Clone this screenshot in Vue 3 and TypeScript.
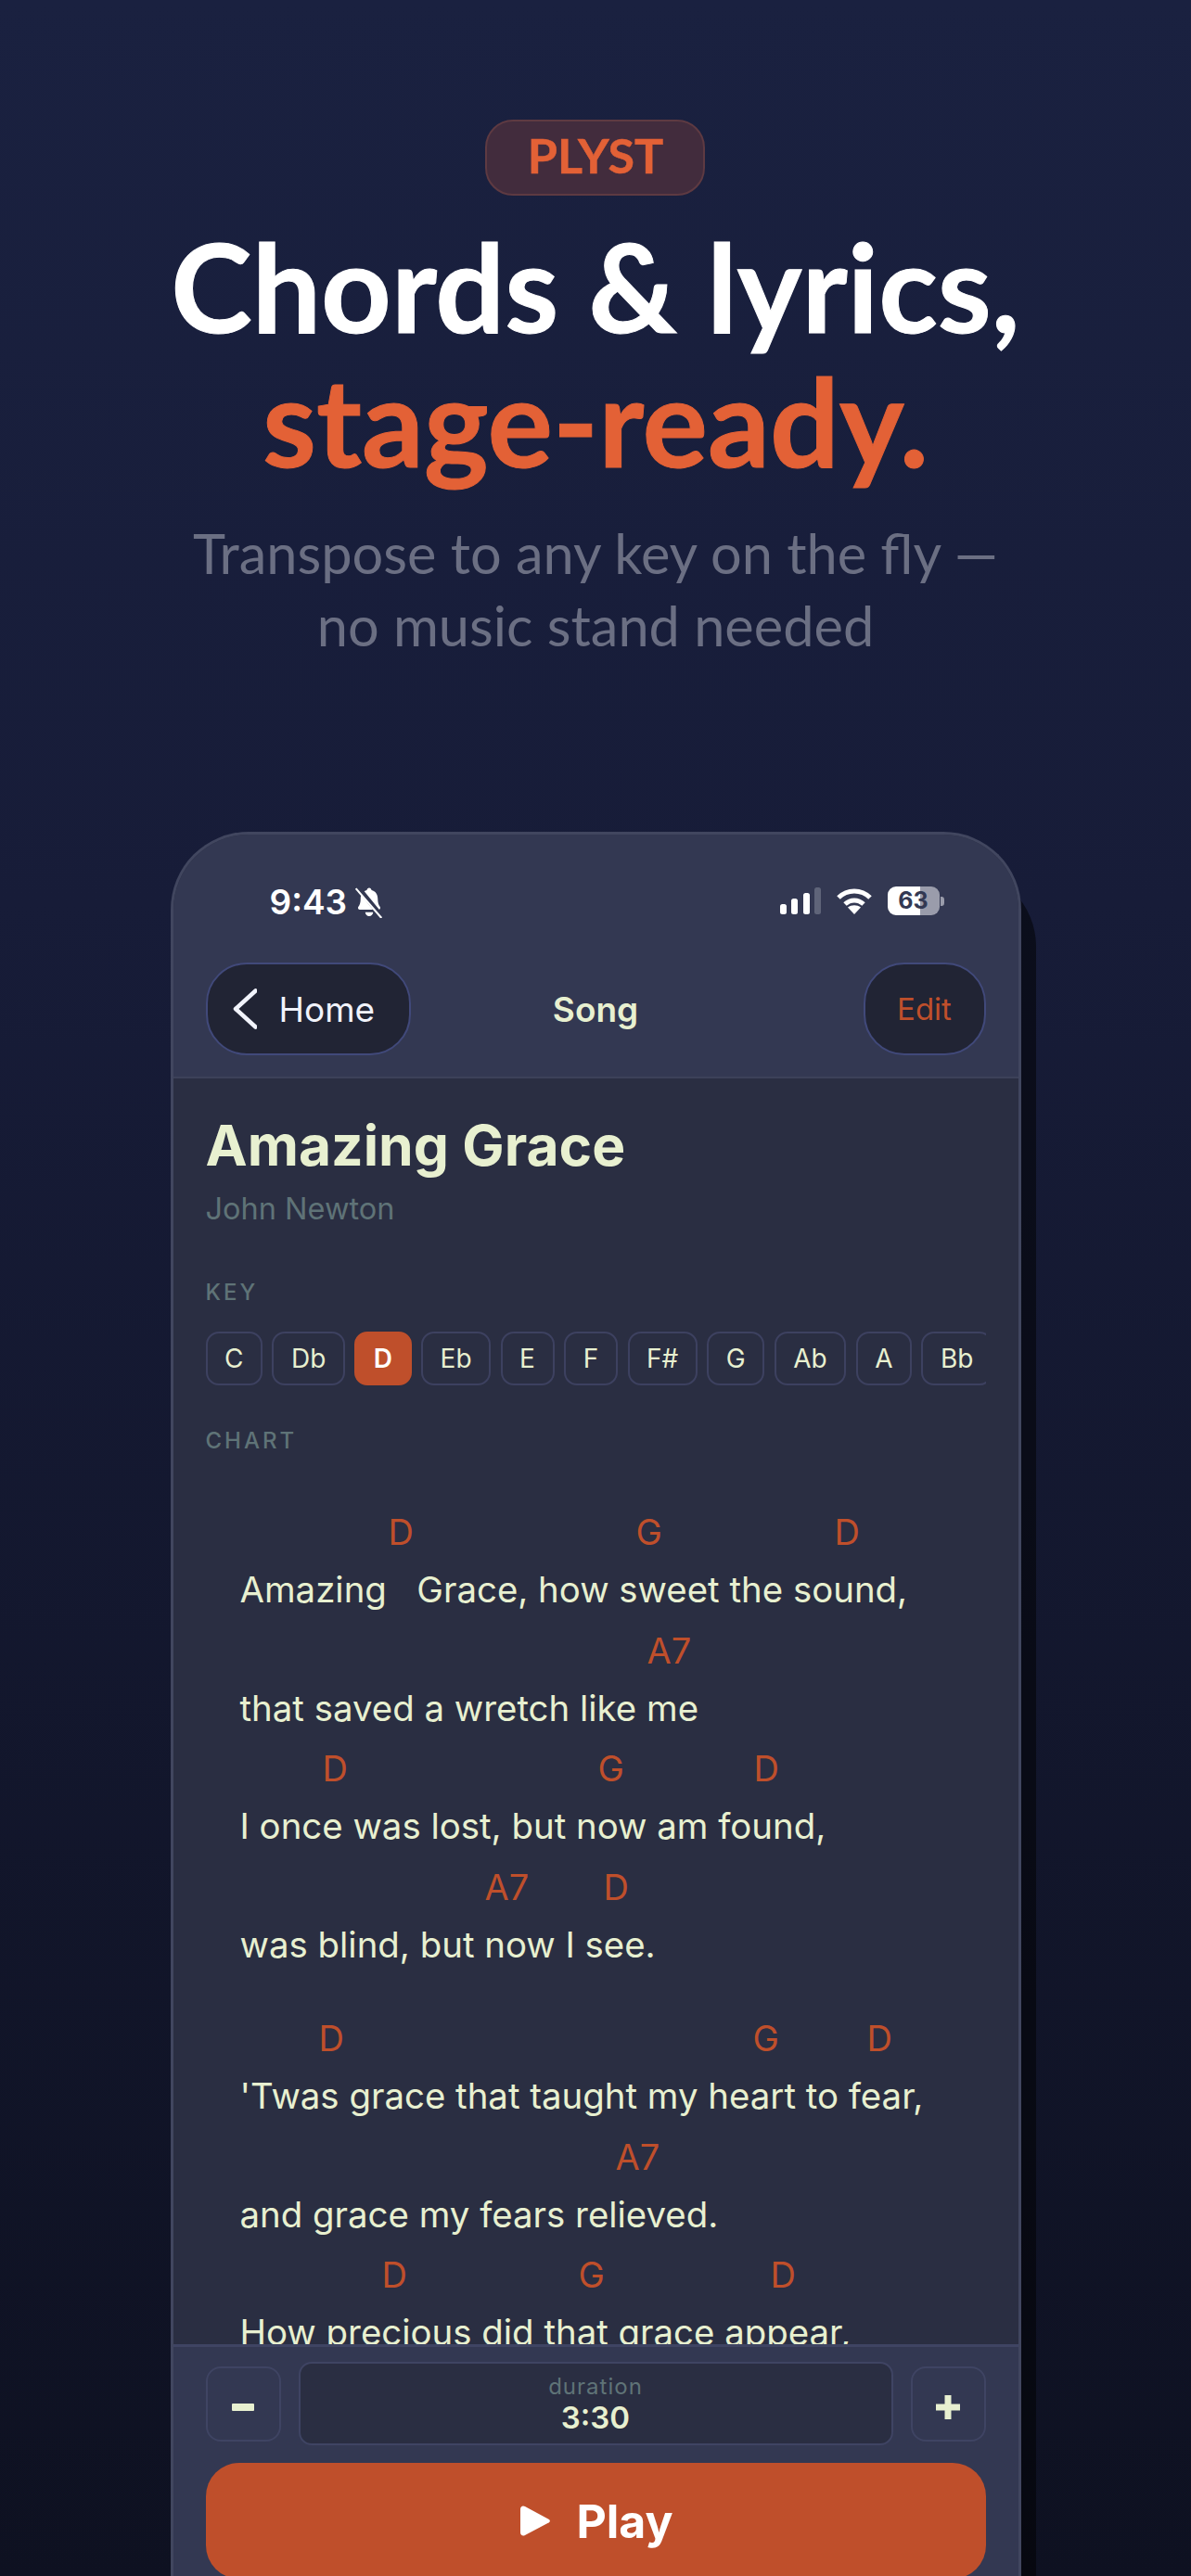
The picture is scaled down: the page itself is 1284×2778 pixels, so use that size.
<script setup lang="ts">
interface Chord {
  name: string
  at: number
}

interface Line {
  chords: Chord[]
  text: string
}

const keys = ['C', 'Db', 'D', 'Eb', 'E', 'F', 'F#', 'G', 'Ab', 'A', 'Bb']

const stanzas: Line[][] = [
  [
    {
      text: 'Amazing   Grace, how sweet the sound,',
      chords: [{ name: 'D', at: 160 }, { name: 'G', at: 427 }, { name: 'D', at: 641 }],
    },
    { text: 'that saved a wretch like me', chords: [{ name: 'A7', at: 439 }] },
    {
      text: 'I once was lost, but now am found,',
      chords: [{ name: 'D', at: 89 }, { name: 'G', at: 386 }, { name: 'D', at: 554 }],
    },
    { text: 'was blind, but now I see.', chords: [{ name: 'A7', at: 264 }, { name: 'D', at: 392 }] },
  ],
  [
    {
      text: "'Twas grace that taught my heart to fear,",
      chords: [{ name: 'D', at: 85 }, { name: 'G', at: 553 }, { name: 'D', at: 676 }],
    },
    { text: 'and grace my fears relieved.', chords: [{ name: 'A7', at: 405 }] },
    {
      text: 'How precious did that grace appear,',
      chords: [{ name: 'D', at: 153 }, { name: 'G', at: 365 }, { name: 'D', at: 572 }],
    },
    { text: 'the hour I first believed.', chords: [{ name: 'A7', at: 300 }, { name: 'D', at: 420 }] },
  ],
]

function chordStyle(line: Line, i: number) {
  const next = line.chords[i + 1]
  return {
    marginLeft: i === 0 ? line.chords[i].at + 'px' : '0',
    width: next ? next.at - line.chords[i].at + 'px' : '60px',
  }
}
</script>

<template>
  <div class="page">
    <header class="hero">
      <span class="badge">PLYST</span>
      <h1 class="headline">Chords &amp; lyrics,<br /><em>stage-ready.</em></h1>
      <p class="sub">Transpose to any key on the fly —<br />no music stand needed</p>
    </header>

    <div class="phone">
      <div class="top">
        <div class="status">
          <div class="status-left">
            <span class="time">9:43</span>
            <svg class="bell" viewBox="0 0 30 32" width="32" height="34">
              <path fill="#fff" d="M15 1.500c1.300 0 2.200.9 2.400 2.200 4 1 6.300 4.200 6.300 8.600 0 4.200.8 6.400 2.200 8.200 1 1.300.3 3-1.500 3H5.600c-1.800 0-2.500-1.700-1.500-3 1.400-1.800 2.200-4 2.200-8.200 0-4.400 2.300-7.600 6.300-8.600.2-1.300 1.100-2.200 2.400-2.200zM11 26h8c-.2 2.400-1.800 4-4 4s-3.800-1.600-4-4z" />
              <path stroke="#333852" stroke-width="5" d="M2-1l27 33" />
              <path stroke="#fff" stroke-width="2" d="M1.500 2l26 30" />
            </svg>
          </div>
          <div class="status-right">
            <svg viewBox="0 0 44 29" width="44" height="29">
              <rect x="0" y="18" width="7" height="11" rx="2.500" fill="#fff" />
              <rect x="12" y="12" width="7" height="17" rx="2.500" fill="#fff" />
              <rect x="25" y="6" width="7" height="23" rx="2.500" fill="#fff" />
              <rect x="37" y="0" width="7" height="29" rx="2.500" fill="#5f6479" />
            </svg>
            <svg viewBox="0 0 38 29" width="38" height="29">
              <path fill="none" stroke="#fff" stroke-width="5" d="M2 11C11.500 1.500 26.500 1.500 36 11" />
              <path fill="none" stroke="#fff" stroke-width="5" d="M9 18c6-5.500 14-5.500 20 0" />
              <path fill="#fff" d="M19 29l-7-7.500c4-3 10-3 14 0z" />
            </svg>
            <div class="battery">
              <span class="battery-num">63</span>
              <span class="battery-tip"></span>
            </div>
          </div>
        </div>
        <nav class="nav">
          <button class="pill back">
            <svg viewBox="0 0 26 44" width="26" height="44">
              <path d="M24.500 2.500L3 22l21.500 19.500" fill="none" stroke="#f1f3fb" stroke-width="4.500" stroke-linecap="round" stroke-linejoin="round" />
            </svg>
            <span>Home</span>
          </button>
          <span class="nav-title">Song</span>
          <button class="pill edit">Edit</button>
        </nav>
      </div>

      <main class="content">
        <h2 class="title">Amazing Grace</h2>
        <div class="author">John Newton</div>

        <div class="label key-label">KEY</div>
        <div class="keys">
          <span v-for="k in keys" :key="k" class="chip" :class="{ active: k === 'D' }">{{ k }}</span>
        </div>

        <div class="label chart-label">CHART</div>
        <div class="chart">
          <div v-for="(stanza, s) in stanzas" :key="s" class="stanza">
            <div v-for="(line, l) in stanza" :key="l" class="line">
              <div class="chords">
                <span v-for="(c, i) in line.chords" :key="i" class="chord" :style="chordStyle(line, i)">{{ c.name }}</span>
              </div>
              <div class="lyric">{{ line.text }}</div>
            </div>
          </div>
        </div>
      </main>

      <footer class="footer">
        <div class="stepper">
          <button class="step">
            <svg viewBox="0 0 26 26" width="26" height="26"><rect x="1" y="9" width="24" height="8" rx="1" fill="#e8f0d0" /></svg>
          </button>
          <div class="duration">
            <span class="duration-label">duration</span>
            <span class="duration-value">3:30</span>
          </div>
          <button class="step">
            <svg viewBox="0 0 26 26" width="26" height="26"><path d="M9.500 0h7v9.500H26v7h-9.500V26h-7v-9.500H0v-7h9.500z" fill="#e8f0d0" /></svg>
          </button>
        </div>
        <button class="play">
          <svg viewBox="0 0 33 33" width="33" height="33">
            <path d="M0 4c0-3 2.600-4.500 5-3l25 13.500c2.500 1.300 2.500 3 0 4.300L5 32c-2.400 1.500-5 0-5-3z" fill="#fff" />
          </svg>
          <span>Play</span>
        </button>
      </footer>
    </div>
  </div>
</template>

<style>
html,
body {
  margin: 0;
  background: #0e1120;
}
</style>

<style scoped>
.page {
  width: 1284px;
  height: 2778px;
  overflow: hidden;
  background: linear-gradient(180deg, #1a2140 0%, #171c38 35%, #0e1121 100%);
  font-family: Inter, "Noto Sans", sans-serif;
  display: flex;
  flex-direction: column;
  align-items: center;
}

.hero {
  height: 897px;
  flex-shrink: 0;
  padding-top: 129px;
  box-sizing: border-box;
  display: flex;
  flex-direction: column;
  align-items: center;
  font-family: Lato, "Noto Sans", sans-serif;
}

.badge {
  width: 237px;
  height: 82px;
  box-sizing: border-box;
  border: 2px solid #5e3a42;
  border-radius: 30px;
  background: #422c3d;
  color: #e36136;
  font-size: 52px;
  font-weight: 700;
  line-height: 73px;
  text-align: center;
  -webkit-text-stroke: 0.5px #e36136;
}

.headline {
  margin: 25px 0 0;
  font-size: 132px;
  line-height: 145px;
  font-weight: 700;
  color: #fff;
  text-align: center;
  -webkit-text-stroke: 1px currentColor;
}

.headline em {
  font-style: normal;
  color: #e36136;
}

.sub {
  margin: 31px 0 0;
  font-size: 59.500px;
  line-height: 78px;
  font-weight: 400;
  color: #6b6f83;
  text-align: center;
}

.phone {
  width: 917px;
  height: 1910px;
  flex-shrink: 0;
  box-sizing: border-box;
  border: 3px solid #41465f;
  border-bottom: none;
  border-radius: 84px 84px 0 0;
  background: #2a2e42;
  box-shadow: 16px 40px 0 rgba(0, 0, 0, 0.5);
  display: flex;
  flex-direction: column;
  overflow: hidden;
}

.top {
  background: #333852;
  height: 261px;
  flex-shrink: 0;
  border-bottom: 2px solid #3c4159;
}

.status {
  height: 138px;
  padding: 50px 80px 0 104px;
  box-sizing: border-box;
  display: flex;
  justify-content: space-between;
  align-items: flex-start;
}

.status-left {
  display: flex;
  align-items: center;
  gap: 8px;
  color: #fff;
}

.time {
  font-size: 37px;
  font-weight: 600;
  line-height: 46px;
}

.status-right {
  display: flex;
  align-items: center;
  gap: 17px;
  height: 31px;
  margin-top: 6px;
}

.battery {
  display: flex;
  align-items: center;
  gap: 1px;
}

.battery-num {
  width: 56px;
  height: 31px;
  border-radius: 9px;
  background: linear-gradient(90deg, #fff 0 63%, #9a9cab 63% 100%);
  color: #333852;
  font-size: 25px;
  font-weight: 700;
  line-height: 31px;
  text-align: center;
}

.battery-tip {
  width: 4px;
  height: 10px;
  border-radius: 0 3px 3px 0;
  background: #9a9cab;
}

.nav {
  display: flex;
  align-items: center;
  justify-content: space-between;
  padding: 0 35px;
  height: 100px;
  position: relative;
}

.pill {
  height: 100px;
  box-sizing: border-box;
  border: 2px solid #41497a;
  border-radius: 44px;
  background: #212434;
  font-family: Inter, sans-serif;
  font-size: 37px;
  display: flex;
  align-items: center;
  padding: 0;
}

.back {
  width: 221px;
  color: #f1f3fb;
  padding-left: 27px;
  gap: 24px;
}

.edit {
  width: 132px;
  color: #bf4f2b;
  font-size: 33px;
  justify-content: center;
}

.nav-title {
  position: absolute;
  left: 0;
  right: 0;
  text-align: center;
  color: #e8f0d0;
  font-size: 37px;
  font-weight: 600;
  pointer-events: none;
}

.content {
  flex: 1;
  min-height: 0;
  overflow: hidden;
  padding: 34px 35px 0;
}

.title {
  margin: 0;
  font-size: 60.500px;
  line-height: 76px;
  font-weight: 700;
  color: #e8f0d0;
}

.author {
  margin-top: 10px;
  font-size: 32.500px;
  line-height: 42px;
  color: #5f7377;
}

.label {
  font-size: 24px;
  line-height: 30px;
  font-weight: 500;
  color: #5f7377;
  letter-spacing: 3px;
}

.key-label {
  margin-top: 54px;
}

.chart-label {
  margin-top: 45px;
}

.keys {
  margin-top: 27px;
  display: flex;
  gap: 10.500px;
  overflow: hidden;
}

.chip {
  flex-shrink: 0;
  min-width: 58px;
  height: 58px;
  box-sizing: border-box;
  padding: 0 18.500px;
  border: 2px solid #3d4160;
  border-radius: 14px;
  font-size: 28px;
  line-height: 54px;
  text-align: center;
  color: #e8f0d0;
}

.chip.active {
  background: #bf4f2b;
  border-color: #bf4f2b;
  color: #fff;
  font-weight: 600;
}

.chart {
  padding: 53px 0 0 37px;
}

.stanza + .stanza {
  margin-top: 36px;
}

.line {
  height: 127.500px;
}

.chords {
  display: flex;
  height: 62px;
  font-size: 38px;
  line-height: 60px;
  color: #bf4f2b;
}

.chord {
  flex-shrink: 0;
}

.lyric {
  font-size: 38.400px;
  line-height: 60px;
  color: #e8f0d0;
  white-space: pre;
}

.footer {
  flex-shrink: 0;
  height: 279px;
  box-sizing: border-box;
  background: #333852;
  border-top: 3px solid #3f4463;
  padding: 16px 35px 0;
}

.stepper {
  display: flex;
  align-items: center;
  gap: 19px;
}

.step {
  width: 81px;
  height: 81px;
  box-sizing: border-box;
  border: 2px solid #3f4463;
  border-radius: 16px;
  background: transparent;
  display: flex;
  align-items: center;
  justify-content: center;
  padding: 8px 0 0;
}

.duration {
  flex: 1;
  height: 90px;
  box-sizing: border-box;
  border: 2px solid #3f4463;
  border-radius: 14px;
  background: #2a2e42;
  display: flex;
  flex-direction: column;
  align-items: center;
  justify-content: center;
}

.duration-label {
  font-size: 24px;
  line-height: 30px;
  color: #5f7377;
  letter-spacing: 1px;
}

.duration-value {
  font-size: 33px;
  line-height: 36px;
  font-weight: 600;
  color: #e8f0d0;
}

.play {
  width: 100%;
  height: 125px;
  margin-top: 19px;
  border: none;
  border-radius: 36px;
  background: #bf4f2b;
  color: #fff;
  font-family: Inter, sans-serif;
  font-size: 50px;
  font-weight: 700;
  display: flex;
  align-items: center;
  justify-content: center;
  gap: 27px;
  padding: 0 0 0 3px;
}
</style>
